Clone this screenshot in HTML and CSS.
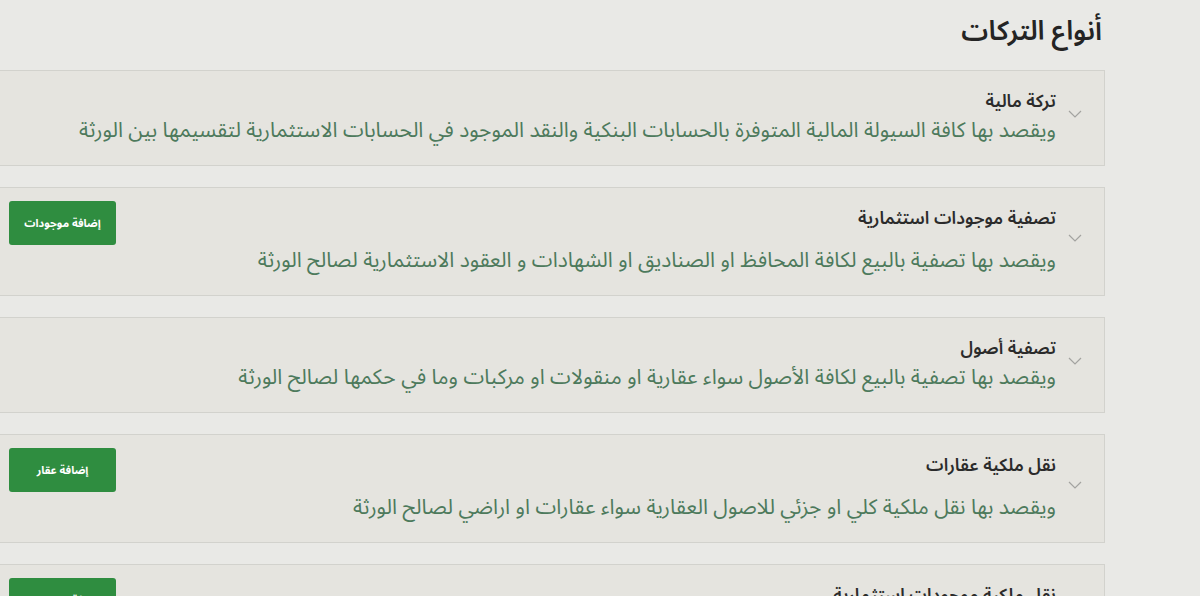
FILE: index.html
```html
<!DOCTYPE html>
<html lang="ar" dir="rtl">
<head>
<meta charset="utf-8">
<title>أنواع التركات</title>
<link rel="stylesheet" href="styles.css">
</head>
<body>
<main class="page">
  <h1 class="page-title">أنواع التركات</h1>

  <section class="card">
    <span class="chev"><svg viewBox="0 0 14 8" width="14" height="8"><path d="M1 1 L7 7 L13 1" fill="none" stroke="#a3a3a0" stroke-width="1.2"/></svg></span>
    <div class="card-body">
      <div class="card-head"><h2 class="card-title">تركة مالية</h2></div>
      <p class="card-desc">ويقصد بها كافة السيولة المالية المتوفرة بالحسابات البنكية والنقد الموجود في الحسابات الاستثمارية لتقسيمها بين الورثة</p>
    </div>
  </section>

  <section class="card">
    <span class="chev"><svg viewBox="0 0 14 8" width="14" height="8"><path d="M1 1 L7 7 L13 1" fill="none" stroke="#a3a3a0" stroke-width="1.2"/></svg></span>
    <div class="card-body">
      <div class="card-head"><h2 class="card-title">تصفية موجودات استثمارية</h2><button class="btn">إضافة موجودات</button></div>
      <p class="card-desc">ويقصد بها تصفية بالبيع لكافة المحافظ او الصناديق او الشهادات و العقود الاستثمارية لصالح الورثة</p>
    </div>
  </section>

  <section class="card">
    <span class="chev"><svg viewBox="0 0 14 8" width="14" height="8"><path d="M1 1 L7 7 L13 1" fill="none" stroke="#a3a3a0" stroke-width="1.2"/></svg></span>
    <div class="card-body">
      <div class="card-head"><h2 class="card-title">تصفية أصول</h2></div>
      <p class="card-desc">ويقصد بها تصفية بالبيع لكافة الأصول سواء عقارية او منقولات او مركبات وما في حكمها لصالح الورثة</p>
    </div>
  </section>

  <section class="card">
    <span class="chev"><svg viewBox="0 0 14 8" width="14" height="8"><path d="M1 1 L7 7 L13 1" fill="none" stroke="#a3a3a0" stroke-width="1.2"/></svg></span>
    <div class="card-body">
      <div class="card-head"><h2 class="card-title">نقل ملكية عقارات</h2><button class="btn">إضافة عقار</button></div>
      <p class="card-desc">ويقصد بها نقل ملكية كلي او جزئي للاصول العقارية سواء عقارات او اراضي لصالح الورثة</p>
    </div>
  </section>

  <section class="card">
    <span class="chev"><svg viewBox="0 0 14 8" width="14" height="8"><path d="M1 1 L7 7 L13 1" fill="none" stroke="#a3a3a0" stroke-width="1.2"/></svg></span>
    <div class="card-body">
      <div class="card-head"><h2 class="card-title">نقل ملكية موجودات استثمارية</h2><button class="btn">إضافة موجودات</button></div>
      <p class="card-desc">ويقصد بها نقل ملكية الموجودات الاستثمارية لصالح الورثة</p>
    </div>
  </section>
</main>
</body>
</html>
```

FILE: styles.css
```css
* { box-sizing: border-box; }
html, body {
  margin: 0;
  padding: 0;
  background: #e9e9e6;
  overflow: hidden;
  height: 596px;
}
body {
  font-family: "Noto Sans Arabic", "Noto Kufi Arabic", "DejaVu Sans", sans-serif;
  color: #2a2a2a;
}
.page {
  width: 1119px;
  margin-right: 95px;
  margin-left: -14px;
  display: flex;
  flex-direction: column;
  gap: 21px;
}
.page-title {
  margin: 14px 3px 0 0;
  font-size: 27px;
  line-height: 36px;
  font-weight: 600;
  color: #242424;
  margin-bottom: -1px;
}
.card {
  display: flex;
  align-items: center;
  background: #e5e4df;
  border: 1px solid #d2d2cd;
  padding: 13px 22px 21px 22px;
}
.chev {
  flex: 0 0 14px;
  display: flex;
  margin-left: 12px;
}
.card-body {
  flex: 1;
  display: flex;
  flex-direction: column;
}
.card-head {
  display: flex;
  justify-content: space-between;
  align-items: flex-start;
  min-height: 32px;
}
.card-title {
  margin: 0;
  padding-top: 6px;
  font-size: 17.5px;
  line-height: 24px;
  font-weight: 600;
  color: #2b2b2b;
}
.btn {
  font-family: inherit;
  width: 107px;
  height: 44px;
  border: none;
  border-radius: 3px;
  background: #2f8d40;
  color: #ffffff;
  font-size: 11px;
  font-weight: 700;
  margin-bottom: 1px;
}
.card-desc {
  margin: 0;
  font-size: 21px;
  line-height: 28px;
  color: #4d7a5c;
  white-space: nowrap;
}
```
